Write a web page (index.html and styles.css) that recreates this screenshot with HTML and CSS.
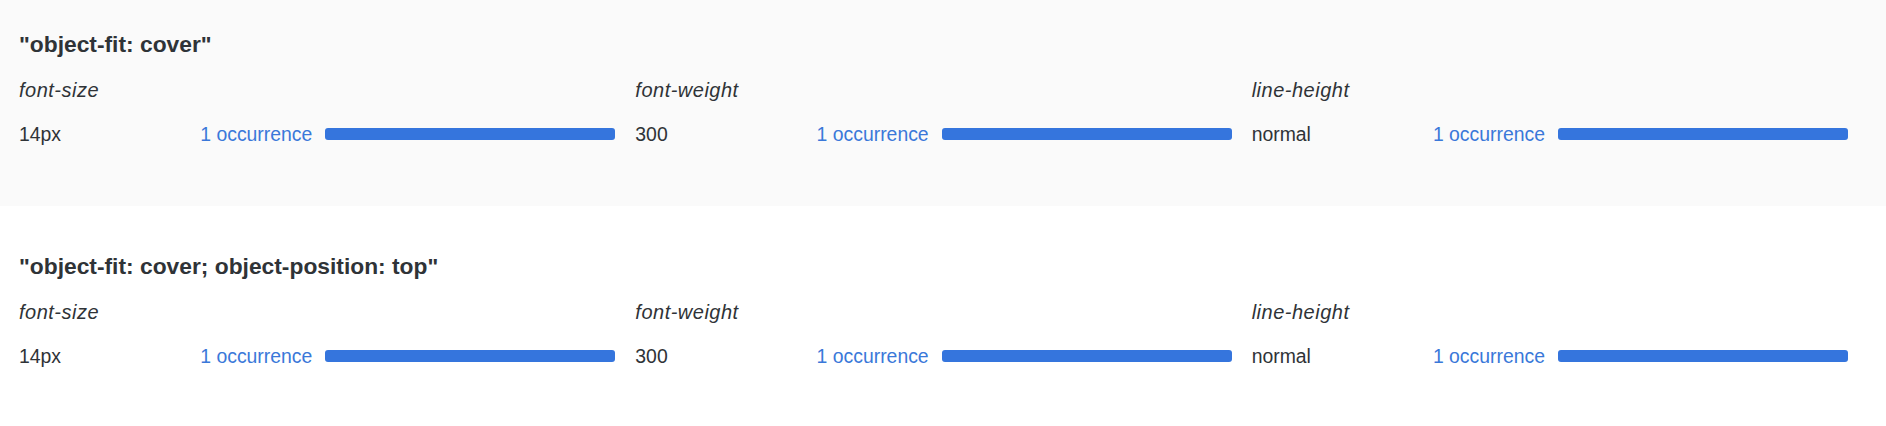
FILE: index.html
```html
<!DOCTYPE html>
<html>
<head>
<meta charset="utf-8">
<link rel="stylesheet" href="styles.css">
</head>
<body>
<div class="page">
  <section class="group group--shaded">
    <h2 class="group__title">"object-fit: cover"</h2>
    <div class="props">
      <div class="prop">
        <div class="prop__name">font-size</div>
        <div class="prop__row">
          <span class="prop__value">14px</span>
          <span class="prop__count">1 occurrence</span>
          <span class="prop__bar"><span class="prop__fill" style="width:100%"></span></span>
        </div>
      </div>
      <div class="prop">
        <div class="prop__name">font-weight</div>
        <div class="prop__row">
          <span class="prop__value">300</span>
          <span class="prop__count">1 occurrence</span>
          <span class="prop__bar"><span class="prop__fill" style="width:100%"></span></span>
        </div>
      </div>
      <div class="prop">
        <div class="prop__name">line-height</div>
        <div class="prop__row">
          <span class="prop__value">normal</span>
          <span class="prop__count">1 occurrence</span>
          <span class="prop__bar"><span class="prop__fill" style="width:100%"></span></span>
        </div>
      </div>
    </div>
  </section>
  <section class="group">
    <h2 class="group__title">"object-fit: cover; object-position: top"</h2>
    <div class="props">
      <div class="prop">
        <div class="prop__name">font-size</div>
        <div class="prop__row">
          <span class="prop__value">14px</span>
          <span class="prop__count">1 occurrence</span>
          <span class="prop__bar"><span class="prop__fill" style="width:100%"></span></span>
        </div>
      </div>
      <div class="prop">
        <div class="prop__name">font-weight</div>
        <div class="prop__row">
          <span class="prop__value">300</span>
          <span class="prop__count">1 occurrence</span>
          <span class="prop__bar"><span class="prop__fill" style="width:100%"></span></span>
        </div>
      </div>
      <div class="prop">
        <div class="prop__name">line-height</div>
        <div class="prop__row">
          <span class="prop__value">normal</span>
          <span class="prop__count">1 occurrence</span>
          <span class="prop__bar"><span class="prop__fill" style="width:100%"></span></span>
        </div>
      </div>
    </div>
  </section>
</div>
</body>
</html>
```

FILE: styles.css
```css
* {
  box-sizing: border-box;
}

html, body {
  margin: 0;
  padding: 0;
  background: #ffffff;
}

body {
  font-family: "Liberation Sans", Arial, sans-serif;
  color: #2f3337;
}

.page {
  display: flex;
  flex-direction: column;
  gap: 16px;
}

.group {
  padding: 31px 38px 61px 19px;
  background: #ffffff;
}

.group--shaded {
  background: #fafafa;
}

.group__title {
  margin: 0 0 22px;
  font-size: 22.8px;
  line-height: 26px;
  font-weight: 700;
  color: #2f3337;
}

.props {
  display: grid;
  grid-template-columns: repeat(3, 1fr);
  column-gap: 20px;
}

.prop__name {
  font-style: italic;
  font-size: 20px;
  letter-spacing: 0.5px;
  line-height: 22px;
  margin-bottom: 22px;
  color: #2f3337;
}

.prop__row {
  display: flex;
  align-items: center;
  font-size: 19.4px;
  line-height: 22px;
}

.prop__value {
  flex: 1;
  color: #2f3337;
}

.prop__count {
  color: #3a78d9;
  margin-right: 13px;
}

.prop__bar {
  display: block;
  width: 290px;
  height: 12px;
}

.prop__fill {
  display: block;
  height: 100%;
  background: #3575dd;
  border-radius: 3px;
}
```
